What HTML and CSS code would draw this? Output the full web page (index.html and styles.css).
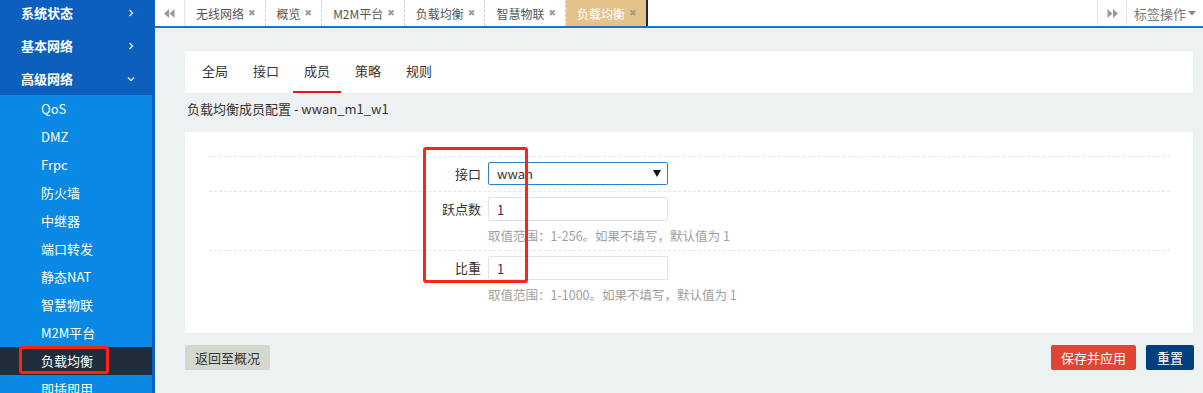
FILE: index.html
```html
<!DOCTYPE html>
<html lang="zh">
<head>
<meta charset="utf-8">
<title>负载均衡</title>
<link rel="stylesheet" href="styles.css">
</head>
<body>
<div class="app">
  <aside class="sidebar">
    <ul class="menu">
      <li class="menu-item">系统状态<svg class="chev" width="8" height="8" viewBox="0 0 8 8"><path d="M2.5 1 L5.5 4 L2.5 7" fill="none" stroke="#cfe0f5" stroke-width="1.5"/></svg></li>
      <li class="menu-item">基本网络<svg class="chev" width="8" height="8" viewBox="0 0 8 8"><path d="M2.5 1 L5.5 4 L2.5 7" fill="none" stroke="#cfe0f5" stroke-width="1.5"/></svg></li>
      <li class="menu-item">高级网络<svg class="chev" width="8" height="8" viewBox="0 0 8 8"><path d="M1 2.5 L4 5.5 L7 2.5" fill="none" stroke="#cfe0f5" stroke-width="1.5"/></svg></li>
    </ul>
    <ul class="submenu">
      <li class="sub-item">QoS</li>
      <li class="sub-item">DMZ</li>
      <li class="sub-item">Frpc</li>
      <li class="sub-item">防火墙</li>
      <li class="sub-item">中继器</li>
      <li class="sub-item">端口转发</li>
      <li class="sub-item">静态NAT</li>
      <li class="sub-item">智慧物联</li>
      <li class="sub-item">M2M平台</li>
      <li class="sub-item active">负载均衡<span class="mark mark-side"></span></li>
      <li class="sub-item">即插即用</li>
    </ul>
  </aside>

  <main class="main">
    <div class="tabbar">
      <div class="nav-btn nav-left"><svg width="11" height="9" viewBox="0 0 11 9"><path d="M5 0 L0 4.5 L5 9 Z M10.5 0 L5.5 4.5 L10.5 9 Z" fill="#9a9a9a"/></svg></div>
      <div class="tabs">
        <div class="tab">无线网络<span class="x">✖</span></div>
        <div class="tab">概览<span class="x">✖</span></div>
        <div class="tab">M2M平台<span class="x">✖</span></div>
        <div class="tab">负载均衡<span class="x">✖</span></div>
        <div class="tab">智慧物联<span class="x">✖</span></div>
        <div class="tab tab-active">负载均衡<span class="x">✖</span></div>
      </div>
      <div class="nav-btn nav-right"><svg width="11" height="9" viewBox="0 0 11 9"><path d="M0.5 0 L5.5 4.5 L0.5 9 Z M6 0 L11 4.5 L6 9 Z" fill="#9a9a9a"/></svg></div>
      <div class="tab-ops">标签操作<svg width="8" height="5" viewBox="0 0 8 5"><path d="M0 0 L8 0 L4 4.5 Z" fill="#888"/></svg></div>
    </div>

    <div class="content">
      <div class="subtabs">
        <div class="subtab">全局</div>
        <div class="subtab">接口</div>
        <div class="subtab sub-active">成员</div>
        <div class="subtab">策略</div>
        <div class="subtab">规则</div>
      </div>

      <div class="page-title">负载均衡成员配置 - wwan_m1_w1</div>

      <div class="form-card">
        <div class="form-row">
          <label class="form-label">接口</label>
          <div class="form-field">
            <div class="select">
              <span>wwan</span>
              <svg width="8" height="7" viewBox="0 0 8 7"><path d="M0 0 L8 0 L4 7 Z" fill="#111"/></svg>
            </div>
          </div>
        </div>
        <div class="form-row">
          <label class="form-label">跃点数</label>
          <div class="form-field">
            <input class="input" type="text" value="1">
            <div class="help">取值范围：1-256。如果不填写，默认值为 1</div>
          </div>
        </div>
        <div class="form-row last">
          <label class="form-label">比重</label>
          <div class="form-field">
            <input class="input" type="text" value="1">
            <div class="help">取值范围：1-1000。如果不填写，默认值为 1</div>
          </div>
        </div>
        <span class="mark mark-form"></span>
      </div>

      <div class="actions">
        <button class="btn btn-back">返回至概况</button>
        <div class="actions-right">
          <button class="btn btn-save">保存并应用</button>
          <button class="btn btn-reset">重置</button>
        </div>
      </div>
    </div>
  </main>
</div>
</body>
</html>
```

FILE: styles.css
```css
* {
  box-sizing: border-box;
}

html, body {
  margin: 0;
  padding: 0;
  height: 393px;
  overflow: hidden;
}

body {
  font-family: "Noto Sans CJK SC", "Liberation Sans", sans-serif;
  font-size: 13px;
  color: #333;
  background: #eef1f2;
}

.app {
  display: flex;
  height: 393px;
}

/* ---------- sidebar ---------- */
.sidebar {
  width: 155px;
  flex: none;
  background: #0c5fbd;
  overflow: hidden;
}

.menu {
  list-style: none;
  margin: -4px 0 0;
  padding: 0;
}

.menu-item {
  height: 33px;
  display: flex;
  align-items: center;
  padding-left: 21px;
  padding-right: 20px;
  color: #fff;
  font-weight: bold;
  font-size: 13px;
  justify-content: space-between;
}

.chev {
  display: block;
}

.submenu {
  list-style: none;
  margin: 0;
  padding: 0;
  width: 152px;
  background: #0a89e4;
}

.sub-item {
  position: relative;
  height: 28px;
  line-height: 28px;
  padding-left: 41px;
  color: #fff;
  font-size: 13px;
}

.sub-item.active {
  background: #212d3b;
}

.mark {
  position: absolute;
  border: 3px solid #ff2318;
  border-radius: 3px;
}

.mark-side {
  left: 19px;
  top: -1px;
  width: 90px;
  height: 28px;
}

/* ---------- main ---------- */
.main {
  flex: 1;
  display: flex;
  flex-direction: column;
  min-width: 0;
}

.tabbar {
  height: 28px;
  display: flex;
  background: #fff;
  border-bottom: 2px solid #1c6fd0;
}

.nav-btn {
  width: 30px;
  flex: none;
  display: flex;
  align-items: center;
  justify-content: center;
  background: #fff;
}

.nav-left {
  border-right: 1px solid #e4e4e4;
}

.nav-right {
  border-left: 1px solid #e4e4e4;
  border-right: 1px solid #e4e4e4;
}

.tabs {
  flex: 1;
  display: flex;
  align-items: stretch;
}

.tab {
  display: flex;
  align-items: center;
  padding: 0 9px 0 11px;
  color: #555;
  font-size: 12px;
  border-right: 1px dashed #cfcfcf;
  white-space: nowrap;
}

.tab .x {
  margin-left: 4px;
  font-size: 9px;
  color: #9a9a9a;
  font-family: "DejaVu Sans", sans-serif;
}

.tab-active {
  background: #e4c38b;
  color: #fff;
  border-right: 2px solid #1e2a3a;
}

.tab-active .x {
  color: #a79a82;
}

.tab-ops {
  width: 76px;
  flex: none;
  display: flex;
  align-items: center;
  justify-content: center;
  gap: 2px;
  color: #777;
  font-size: 13px;
}

/* ---------- content ---------- */
.content {
  flex: 1;
  padding: 23px 10px 0 30px;
  background: #eef1f2;
}

.subtabs {
  height: 42px;
  display: flex;
  background: #fff;
  padding-left: 6px;
}

.subtab {
  height: 42px;
  line-height: 40px;
  padding: 0 11px;
  margin-right: 3px;
  color: #333;
  font-size: 13px;
  border-bottom: 2px solid transparent;
}

.sub-active {
  border-bottom-color: #e8141b;
}

.page-title {
  line-height: 20px;
  padding: 6px 2px 0;
  margin-bottom: 13px;
  font-size: 13px;
  color: #333;
}

.form-card {
  position: relative;
  background: #fff;
  padding: 24px 23px 24px 24px;
}

.form-row {
  display: flex;
  border-top: 1px dashed #e2e6e8;
  padding: 5px 0 0;
}

.form-label {
  width: 279px;
  flex: none;
  text-align: right;
  line-height: 24px;
  padding-right: 7px;
  color: #333;
  font-size: 13px;
}

.form-field {
  display: flex;
  flex-direction: column;
}

.form-row:first-child .form-field {
  padding-bottom: 6px;
}

.select {
  width: 180px;
  height: 23px;
  border: 1px solid #2f80c4;
  border-radius: 2px;
  display: flex;
  align-items: center;
  justify-content: space-between;
  padding: 0 6px 0 8px;
  color: #333;
  font-size: 13px;
}

.input {
  width: 180px;
  height: 24px;
  border: 1px solid #dfe4e6;
  border-radius: 2px;
  padding: 0 8px;
  color: #5c1f55;
  font-family: "Noto Sans CJK SC", "Liberation Sans", sans-serif;
  font-size: 13px;
  outline: none;
}

.help {
  line-height: 18px;
  padding: 6px 0 5px;
  color: #a0a0a0;
  font-size: 12.5px;
  white-space: nowrap;
}

.mark-form {
  left: 238px;
  top: 15px;
  width: 105px;
  height: 136px;
}

/* ---------- actions ---------- */
.actions {
  display: flex;
  justify-content: space-between;
  margin-top: 12px;
}

.actions-right {
  display: flex;
  gap: 10px;
  margin-right: -1px;
}

.btn {
  height: 25px;
  border: none;
  border-radius: 2px;
  padding: 0 10px;
  font-family: "Noto Sans CJK SC", "Liberation Sans", sans-serif;
  font-size: 13px;
  line-height: 25px;
  cursor: pointer;
}

.btn-back {
  background: #d3d9ce;
  color: #333;
}

.btn-save {
  background: #df4535;
  color: #fff;
}

.btn-reset {
  background: #033f7e;
  color: #fff;
  padding: 0 11px;
}
```
